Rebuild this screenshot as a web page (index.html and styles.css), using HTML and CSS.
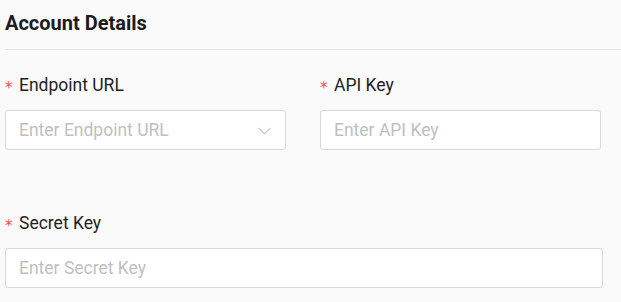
FILE: index.html
```html
<!DOCTYPE html>
<html lang="en">
<head>
<meta charset="utf-8">
<title>Account Details</title>
<link rel="stylesheet" href="styles.css">
</head>
<body>
<div class="page">
  <header class="header">
    <h2 class="title">Account Details</h2>
  </header>
  <form class="form">
    <div class="row">
      <div class="field">
        <label class="label"><span class="req">*</span>Endpoint URL</label>
        <div class="input select">
          <span class="placeholder">Enter Endpoint URL</span>
          <svg class="chev" width="13" height="8" viewBox="0 0 13 8"><path d="M0.5 0.8 L6.5 6.8 L12.5 0.8" fill="none" stroke="#bfbfbf" stroke-width="1.1"/></svg>
        </div>
      </div>
      <div class="field">
        <label class="label"><span class="req">*</span>API Key</label>
        <input class="input" type="text" placeholder="Enter API Key">
      </div>
    </div>
    <div class="field wide">
      <label class="label"><span class="req">*</span>Secret Key</label>
      <input class="input" type="text" placeholder="Enter Secret Key">
    </div>
  </form>
</div>
</body>
</html>
```
FILE: styles.css
```css
html, body {
  margin: 0;
  padding: 0;
  background: #fafafa;
  font-family: Roboto, "Liberation Sans", sans-serif;
}
.page {
  padding-left: 5px;
}
.header {
  padding-top: 9px;
  padding-bottom: 12px;
  border-bottom: 1px solid #e6e6e6;
}
.title {
  margin: 0;
  font-size: 20px;
  line-height: 28px;
  font-weight: 700;
  color: #1c1c1c;
}
.form {
  padding-top: 24px;
  width: 598px;
}
.row {
  display: grid;
  grid-template-columns: 281px 281px;
  column-gap: 34px;
}
.field {
  display: flex;
  flex-direction: column;
}
.wide {
  margin-top: 62px;
}
.label {
  display: block;
  height: 22px;
  font-size: 17.5px;
  line-height: 22px;
  color: #1f1f1f;
  margin-bottom: 14px;
  white-space: nowrap;
}
.req {
  display: inline-block;
  color: #ff4d4f;
  font-family: SimSun, "DejaVu Sans", sans-serif;
  font-size: 15px;
  line-height: 10px;
  width: 14px;
  vertical-align: -2px;
}
.input {
  box-sizing: border-box;
  height: 40px;
  border: 1px solid #d9d9d9;
  border-radius: 3px;
  background: #ffffff;
  padding: 0 13px;
  font-family: Roboto, "Liberation Sans", sans-serif;
  font-size: 17.5px;
  color: #1f1f1f;
  outline: none;
  width: 100%;
  margin: 0;
}
.input::placeholder {
  color: #bfbfbf;
}
.select {
  display: flex;
  align-items: center;
  justify-content: space-between;
}
.placeholder {
  color: #bfbfbf;
}
.chev {
  margin-right: 1px;
  margin-top: 1px;
}
```
